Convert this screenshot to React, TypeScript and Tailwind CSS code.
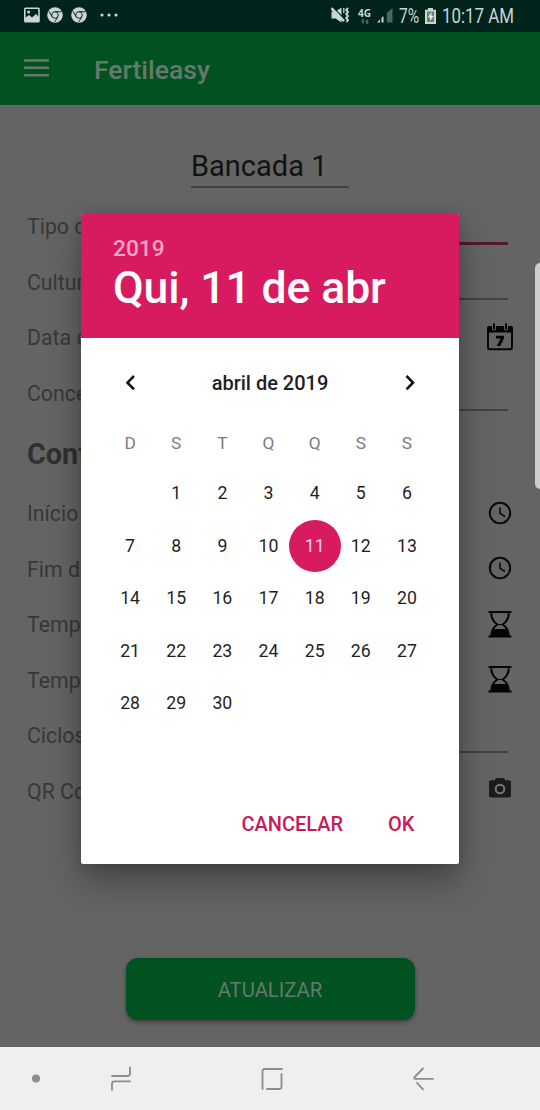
import React from "react";

const weekDays = ["D", "S", "T", "Q", "Q", "S", "S"];
const days: (number | null)[] = [null, ...Array.from({ length: 30 }, (_, i) => i + 1)];

function ChromeIcon() {
  return (
    <svg width="16" height="16" viewBox="0 0 16 16" fill="none">
      <circle cx="8" cy="8" r="7.8" fill="#c9d6d3" />
      <circle cx="8" cy="8" r="3.3" stroke="#00231c" strokeWidth="0.9" />
      <path d="M8 4.7H14.6M5.1 9.7 1.9 4.2M10.9 9.7 7.8 15" stroke="#00231c" strokeWidth="0.9" />
    </svg>
  );
}

function StatusBar() {
  return (
    <div className="flex h-8 items-center bg-[#00231c] pr-[26px] pl-6 text-[#c9d6d3]">
      <svg className="-mt-0.5" width="16" height="16" viewBox="0 0 16 16" fill="none">
        <rect x="0.8" y="1.2" width="14.2" height="13.6" rx="0.8" stroke="#c9d6d3" strokeWidth="1.6" />
        <path d="M1 14v-3l4-3 3 2.5L12 7l3 3v4.5z" fill="#c9d6d3" />
        <circle cx="4.6" cy="5" r="1.5" fill="#c9d6d3" />
      </svg>
      <div className="-mt-0.5 ml-[7px] flex gap-2">
        <ChromeIcon />
        <ChromeIcon />
      </div>
      <svg className="-mt-0.5 ml-[13px]" width="18" height="6" viewBox="0 0 18 6" fill="#c9d6d3">
        <circle cx="2" cy="3" r="1.6" />
        <circle cx="9" cy="3" r="1.6" />
        <circle cx="16" cy="3" r="1.6" />
      </svg>
      <div className="flex-1" />
      <svg className="-mt-0.5" width="19" height="16" viewBox="0 0 19 16" fill="none" stroke="#c9d6d3">
        <path d="M0.5 4.5h4L10.5 0.5v15L4.500 11.500h-4z" fill="#c9d6d3" stroke="none" />
        <path d="M2 0.500l12 12" stroke="#00231c" strokeWidth="1.2" />
        <path d="M0.500 1.200l12.500 13" strokeWidth="2.4" />
        <path d="M17 1l-1.800 2 1.800 2-1.800 2 1.800 2-1.800 2 1.800 2-1.500 2" strokeWidth="1.9" />
        <path d="M12.800 1v5" strokeWidth="1.300" />
      </svg>
      <div className="ml-[8px] flex h-[17px] w-[13px] flex-col items-center">
        <span className="font-['Open_Sans',sans-serif] text-[10px] leading-[11px] font-bold">4G</span>
        <svg width="8" height="5" viewBox="0 0 8 5" fill="#4a6761">
          <path d="M0.800 0h2v2.500H4L2 5 0 2.500h0.800zM5.200 5h2V2.500H8L6 0 4 2.500h1.200z" />
        </svg>
      </div>
      <svg className="-mt-px ml-[6px]" width="16" height="15" viewBox="0 0 16 15">
        <path d="M0 14.500 3 11.500v3zM4.500 10 6.500 8v6.500h-2z" fill="#c9d6d3" />
        <path d="M9.800 5 15.500 0v14.500H9.800z" fill="#4a6761" />
      </svg>
      <span className="ml-[6px] w-[22px] pt-0.5 text-[19.5px] leading-6">
        <span className="inline-block origin-left scale-x-[.8]">7%</span>
      </span>
      <svg className="-mt-px ml-[4px]" width="11" height="16" viewBox="0 0 11 16" fill="none">
        <path d="M3 0h5v1.800h3V16H0V1.800h3z" fill="#c9d6d3" />
        <rect x="2" y="3.500" width="7" height="10.500" fill="#6c7f7b" />
        <path d="M6.500 4 3 9.300h2V13l3.500-5h-2z" fill="#e8efed" />
      </svg>
      <span className="ml-[6px] w-[72px] pt-0.5 text-[19.5px] leading-6 whitespace-nowrap">
        <span className="inline-block origin-left scale-x-[.865]">10:17 AM</span>
      </span>
    </div>
  );
}

function CalendarIcon() {
  return (
    <svg className="mb-[2px]" width="28" height="28" viewBox="0 0 28 28">
      <rect x="2" y="4" width="24" height="22.300" rx="2" fill="none" stroke="#050505" strokeWidth="1.900" />
      <path d="M1 5.500Q1 3 3.500 3h21Q27 3 27 5.500V9.500H1z" fill="#050505" />
      <path d="M8 1v4.500M20 1v4.500" stroke="#646464" strokeWidth="4" strokeLinecap="round" />
      <path d="M8 1.200v4.300M20 1.200v4.300" stroke="#050505" strokeWidth="2" strokeLinecap="round" />
      <path d="M10 12.800h8v2.500L14.300 23h-3.600l4-7.600H10z" fill="#050505" />
    </svg>
  );
}

function ClockIcon() {
  return (
    <svg className="mb-[2px]" width="24" height="24" viewBox="0 0 24 24" fill="none" stroke="#0a0a0a">
      <circle cx="12" cy="12" r="10.200" strokeWidth="2" />
      <path d="M12 6.500v5.800l5 3.200" strokeWidth="1.600" />
    </svg>
  );
}

function HourglassIcon() {
  return (
    <svg className="mb-[2px]" width="24" height="28" viewBox="0 0 24 28" fill="none" stroke="#050505">
      <path d="M0.500 2h23M0.500 26.500h23" strokeWidth="2" />
      <path d="M3.200 2.500c0 6 3 10 6.300 12-3.500 2-6.300 6-6.300 12M20.800 2.500c0 6-3 10-6.300 12 3.500 2 6.300 6 6.300 12" strokeWidth="2" />
      <path d="M10.500 14.500h3M6 19.500h12l2.500 7h-17z" fill="#050505" strokeWidth="1.200" />
    </svg>
  );
}

function CameraIcon() {
  return (
    <svg width="24" height="22" viewBox="0 0 24 22" fill="none">
      <path d="M8 1h8l1.500 2.200H21q2 0 2 2v13.300q0 2-2 2H3q-2 0-2-2V5.200q0-2 2-2h3.500z" fill="#1b1b1b" />
      <circle cx="12" cy="12" r="4.300" stroke="#777" strokeWidth="2" />
    </svg>
  );
}

type RowProps = { label: string; line?: "gray" | "pink"; children?: React.ReactNode };

function Row({ label, line, children }: RowProps) {
  return (
    <div className="flex h-[55.5px] justify-between pr-[26px] pl-[27px] text-[21.3px] leading-[56px] text-[#383838]">
      <span className="whitespace-nowrap">{label}</span>
      {line === "gray" && <div className="mr-[6px] h-[45px] w-[260px] border-b-2 border-[#424242]" />}
      {line === "pink" && <div className="mr-[6px] h-[46px] w-[260px] border-b-3 border-[#56172f]" />}
      {children && <div className="flex items-center">{children}</div>}
    </div>
  );
}

function DatePicker() {
  return (
    <div className="absolute top-[214px] left-[81px] flex h-[650px] w-[378px] flex-col rounded-[2px] bg-white text-[#1f1f1f] shadow-[0_18px_34px_0_rgba(0,0,0,0.3),0_2px_14px_rgba(0,0,0,0.14)]">
      <div className="h-[124px] rounded-t-[2px] bg-[#d81b60] pt-[20px] pl-8 font-medium">
        <div className="text-[22.7px] leading-[29px] text-[#f3a6c3]">2019</div>
        <div className="text-[44.5px] leading-[51px] tracking-[-0.1px] text-white">Qui, 11 de abr</div>
      </div>
      <div className="flex h-[90px] items-center justify-between px-[39px]">
        <svg width="20" height="20" viewBox="0 0 20 20" fill="none" stroke="#111" strokeWidth="2.6">
          <path d="M14 3 7.500 9.700l6.500 6.700" />
        </svg>
        <span className="text-[20px] font-medium">abril de 2019</span>
        <svg width="20" height="20" viewBox="0 0 20 20" fill="none" stroke="#111" strokeWidth="2.6">
          <path d="M6.500 3 13 9.700l-6.500 6.700" />
        </svg>
      </div>
      <div className="ml-[26px] grid w-[323px] grid-cols-7 text-center text-[17.3px] leading-[30px] text-[#7c7c7c]">
        {weekDays.map((d, i) => (
          <span key={i}>{d}</span>
        ))}
      </div>
      <div className="mt-[9px] ml-[26px] grid w-[323px] auto-rows-[52.5px] grid-cols-7 text-[17.7px]">
        {days.map((d, i) => (
          <div key={i} className="flex items-center justify-center pt-px">
            {d === 11 ? (
              <span className="-mt-px flex size-[52px] shrink-0 items-center justify-center rounded-full bg-[#d81b60] pt-px text-[#fbd5e3]">
                11
              </span>
            ) : (
              d
            )}
          </div>
        ))}
      </div>
      <div className="mt-auto flex justify-end gap-[45px] pr-[44.5px] pb-[25px] text-[20px] leading-[30px] font-medium text-[#c8195a]">
        <span>CANCELAR</span>
        <span>OK</span>
      </div>
    </div>
  );
}

export default function App() {
  return (
    <div className="relative flex h-[1110px] w-[540px] flex-col overflow-hidden bg-[#646464] font-[Roboto,sans-serif]">
      <StatusBar />
      <header className="flex h-[73px] items-center bg-[#015221] pl-6 text-[#66796c]">
        <svg className="mb-px" width="25" height="18" viewBox="0 0 25 18" stroke="#66796c" strokeWidth="2.5">
          <path d="M0 1.500h25M0 8.800h25M0 16.200h25" />
        </svg>
        <span className="mt-[2px] ml-[45px] text-[26.5px] font-medium">Fertileasy</span>
      </header>
      <main className="flex flex-1 flex-col">
        <div className="mt-[38px] ml-[191px] h-[45px] w-[158px] border-b-2 border-[#414141] text-[29px] leading-[46px] text-[#121212]">
          Bancada 1
        </div>
        <div className="mt-[11px]">
          <Row label="Tipo de" line="pink" />
          <Row label="Cultura" line="gray" />
          <Row label="Data de">
            <CalendarIcon />
          </Row>
          <Row label="Concent" line="gray" />
        </div>
        <h2 className="h-[65px] pl-[27px] text-[28.8px] leading-[67px] font-bold text-[#303030]">Conf</h2>
        <Row label="Início">
          <div className="mr-[2px]"><ClockIcon /></div>
        </Row>
        <Row label="Fim de">
          <div className="mr-[2px]"><ClockIcon /></div>
        </Row>
        <Row label="Tempo">
          <div className="mr-[2px]"><HourglassIcon /></div>
        </Row>
        <Row label="Tempo">
          <div className="mr-[2px]"><HourglassIcon /></div>
        </Row>
        <Row label="Ciclos" line="gray" />
        <Row label="QR Code">
          <div className="mr-[2px] mb-[6px]"><CameraIcon /></div>
        </Row>
        <button className="mx-auto mt-auto mb-[27px] h-[62px] w-[289px] rounded-[12px] bg-[#015221] pt-0.5 text-[20.3px] text-[#66796c] shadow-[0_2px_4px_rgba(0,0,0,0.4)]">
          ATUALIZAR
        </button>
      </main>
      <nav className="h-[63px] bg-[#efefef]">
        <svg width="540" height="63" viewBox="0 0 540 63" fill="none" stroke="#8c8c8c" strokeWidth="1.8" strokeLinecap="round" strokeLinejoin="round">
          <circle cx="36" cy="31.500" r="4" fill="#8c8c8c" stroke="none" />
          <path d="M112 29h15.500q2.500 0 2.500-2.500V20.500M130 34.300H114.500q-2.500 0-2.500 2.500V43" />
          <path d="M262.500 42V24.500q0-2.500 2.500-2.500h17M281.500 27v12.500q0 2.500-2.500 2.500h-12" />
          <path d="M433 31.800h-17.500q-2.300 0-.8-1.800L423 21.500M417 35.800l6 6.500" />
        </svg>
      </nav>
      <div className="absolute top-[263px] right-0 h-[226px] w-[5px] rounded-l-[5px] bg-[#cdcdcd]" />
      <DatePicker />
    </div>
  );
}
